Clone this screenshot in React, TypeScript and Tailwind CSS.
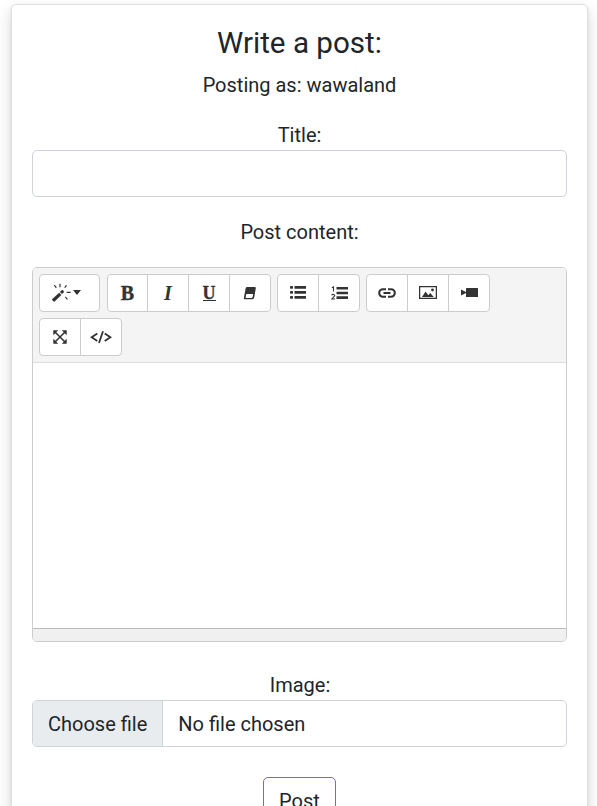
import React, { useState } from "react";

const INK = "#333333";

function Icon({ w, h, children }: { w: number; h: number; children: React.ReactNode }) {
  return (
    <svg className="mb-px" width={w} height={h} viewBox={`0 0 ${w} ${h}`} fill={INK} stroke="none" aria-hidden="true">
      {children}
    </svg>
  );
}

function MagicIcon() {
  return (
    <Icon w={20} h={20}>
      <path d="m.8 16.6 7.300-6.900 2.300 2.300-7.300 6.900z" />
      <path d="m8.800 9 1.900-1.800c1.200-.6 2.600.8 2 2l-1.800 1.900z" />
      <path d="M9 .8v3.400M3.300 2l2 2.800M15.500 2.400l-1.800 2.300M15.700 9.400h4M14.400 13.800l2 2.700" stroke={INK} strokeWidth="1.200" />
    </Icon>
  );
}

function EraserIcon() {
  return (
    <Icon w={14} h={14}>
      <path d="M4.300 1h7.500c.8 0 1.100.4 1 1.200L11.300 11c-.3 1.500-1 2.200-2 2.200H2C1 13.200.7 12.700.9 11.700L2.500 2.900C2.700 1.600 3.300 1 4.300 1z" />
      <path d="M3.300 8h6.800l-.5 3.100c-.1.500-.4.800-.9.800H2.600z" fill="#fff" />
    </Icon>
  );
}

function BulletsIcon() {
  return (
    <Icon w={16} h={13}>
      <rect x="0" y="0" width="3" height="2.800" rx=".8" />
      <rect x="0" y="5" width="3" height="2.800" rx=".8" />
      <rect x="0" y="10" width="3" height="2.800" rx=".8" />
      <path d="M4.500 0H16v2.800H4.500zM4.500 5H16v2.800H4.500zM4.500 10H16v2.800H4.500z" />
    </Icon>
  );
}

function NumbersIcon() {
  return (
    <Icon w={17} h={14}>
      <path d="M5.500 1H17v2.600H5.500zM5.500 5.700H17v2.600H5.500zM5.500 10.300H17v2.600H5.500z" />
      <path d="M.8 1.900 2.500.900V5.500M.7 9.300c.4-1.200 3-1.200 3 .2 0 1.200-2 2-2.900 3.500h3.200" fill="none" stroke={INK} strokeWidth="1.100" />
    </Icon>
  );
}

function LinkIcon() {
  return (
    <Icon w={18} h={10}>
      <path d="M8 1.200H5a3.800 3.800 0 0 0 0 7.600h3M10 1.200h3a3.800 3.800 0 0 1 0 7.600h-3M5.500 5h7" fill="none" stroke={INK} strokeWidth="2.100" />
    </Icon>
  );
}

function PictureIcon() {
  return (
    <Icon w={18} h={13}>
      <path d="M.6.600h16.800v11.800H.6z" fill="none" stroke={INK} strokeWidth="1.300" />
      <path d="M3 11 6.600 5.500l2.600 3.700 2-2.200 3.600 4z" />
      <circle cx="13.500" cy="4" r="1.400" />
    </Icon>
  );
}

function VideoIcon() {
  return (
    <Icon w={17} h={9}>
      <path d="M0 1.500 5 4v1L0 7.500z" />
      <rect x="5" y="0" width="12" height="9" rx=".6" />
    </Icon>
  );
}

function ExpandIcon() {
  return (
    <Icon w={14} h={14}>
      <path d="M.3.300h4.900L.3 5.200zM13.700.300v4.900L8.800.300zM.3 13.700V8.800l4.900 4.900zM13.700 13.700H8.800l4.900-4.900z" />
      <path d="m1.500 1.500 11 11M12.500 1.500l-11 11" stroke={INK} strokeWidth="1.500" />
    </Icon>
  );
}

function CodeIcon() {
  return (
    <Icon w={22} h={14}>
      <path d="M7.300 3.400 1.600 7.200l5.700 3.800M14.700 3.400l5.700 3.800-5.700 3.800M13 1.200 9 13" fill="none" stroke={INK} strokeWidth="1.800" />
    </Icon>
  );
}

function Group({ children }: { children: React.ReactNode }) {
  return (
    <div className="flex h-[38px] divide-x divide-[#ccc] overflow-hidden rounded-[4px] border border-[#ccc] bg-white">
      {children}
    </div>
  );
}

function Tool({ label, width = "w-[41px]", children }: { label: string; width?: string; children: React.ReactNode }) {
  return (
    <button type="button" aria-label={label} className={`flex ${width} shrink-0 items-center justify-center text-[#333]`}>
      {children}
    </button>
  );
}

export default function App() {
  const [title, setTitle] = useState("");
  return (
    <div className="h-[806px] overflow-hidden bg-white pt-1 pr-[9px] pl-[11px] font-['Roboto',sans-serif] text-[20px] leading-[30px] text-[#212529]">
      <main className="flex h-[860px] flex-col rounded-[5px] border border-[#dfdfdf] bg-white px-5 pt-5 text-center shadow-[0_7px_16px_rgba(20,20,40,0.15),0_2px_4px_rgba(20,20,40,0.08)]">
        <h1 className="text-[29.6px] leading-9">Write a post:</h1>
        <p className="mt-[9px]">Posting as: wawaland</p>

        <label htmlFor="title" className="mt-5">Title:</label>
        <input
          id="title"
          value={title}
          onChange={(e) => setTitle(e.target.value)}
          className="h-[47px] w-full shrink-0 rounded-[5px] border border-[#ced4da] px-4 outline-none"
        />

        <p className="mt-5">Post content:</p>
        <section className="mt-5 flex h-[375px] shrink-0 flex-col overflow-hidden rounded-[5px] border border-[#ccc]">
          <div className="flex h-[95px] shrink-0 flex-col gap-1.5 border-b border-[#ddd] bg-[#f4f4f4] p-1.5">
            <div className="flex gap-1.5">
              <div className="mr-px">
                <Group>
                  <Tool label="Style" width="w-[59px]">
                    <span className="flex items-center gap-[2px] pr-[7px]">
                      <MagicIcon />
                      <Icon w={8} h={5}><path d="M0 0h8L4 5z" /></Icon>
                    </span>
                  </Tool>
                </Group>
              </div>
              <Group>
                <Tool label="Bold" width="w-10">
                  <span className="font-['Liberation_Serif',serif] text-[20px] leading-5 font-bold [-webkit-text-stroke:0.4px_#333]">B</span>
                </Tool>
                <Tool label="Italic">
                  <span className="font-['Liberation_Serif',serif] text-[20px] leading-5 font-bold italic">I</span>
                </Tool>
                <Tool label="Underline">
                  <span className="border-b border-[#333] font-['Liberation_Serif',serif] text-[18px] leading-[14px] font-bold [-webkit-text-stroke:0.3px_#333]">U</span>
                </Tool>
                <Tool label="Clear formatting" width="w-10"><EraserIcon /></Tool>
              </Group>
              <Group>
                <Tool label="Unordered list"><BulletsIcon /></Tool>
                <Tool label="Ordered list" width="w-10"><NumbersIcon /></Tool>
              </Group>
              <Group>
                <Tool label="Link"><LinkIcon /></Tool>
                <Tool label="Picture"><PictureIcon /></Tool>
                <Tool label="Video" width="w-10"><VideoIcon /></Tool>
              </Group>
            </div>
            <div className="flex">
              <Group>
                <Tool label="Full screen"><ExpandIcon /></Tool>
                <Tool label="Code view" width="w-10"><CodeIcon /></Tool>
              </Group>
            </div>
          </div>
          <div contentEditable suppressContentEditableWarning className="flex-1 bg-white text-left outline-none" />
          <div className="h-[13px] shrink-0 border-t border-[#bbb] bg-[#f0f0f0]" />
        </section>

        <p className="mt-7 pl-px">Image:</p>
        <div className="flex h-[47px] shrink-0 items-center overflow-hidden rounded-[5px] border border-[#ced4da]">
          <button type="button" className="h-full border-r border-[#ced4da] bg-[#e9ecef] px-[15px]">Choose file</button>
          <span className="pl-[15px]">No file chosen</span>
        </div>

        <button type="button" className="mt-[30px] h-[47px] w-[73px] shrink-0 self-center rounded-[5px] border border-[#7868d0]">
          Post
        </button>
      </main>
    </div>
  );
}
